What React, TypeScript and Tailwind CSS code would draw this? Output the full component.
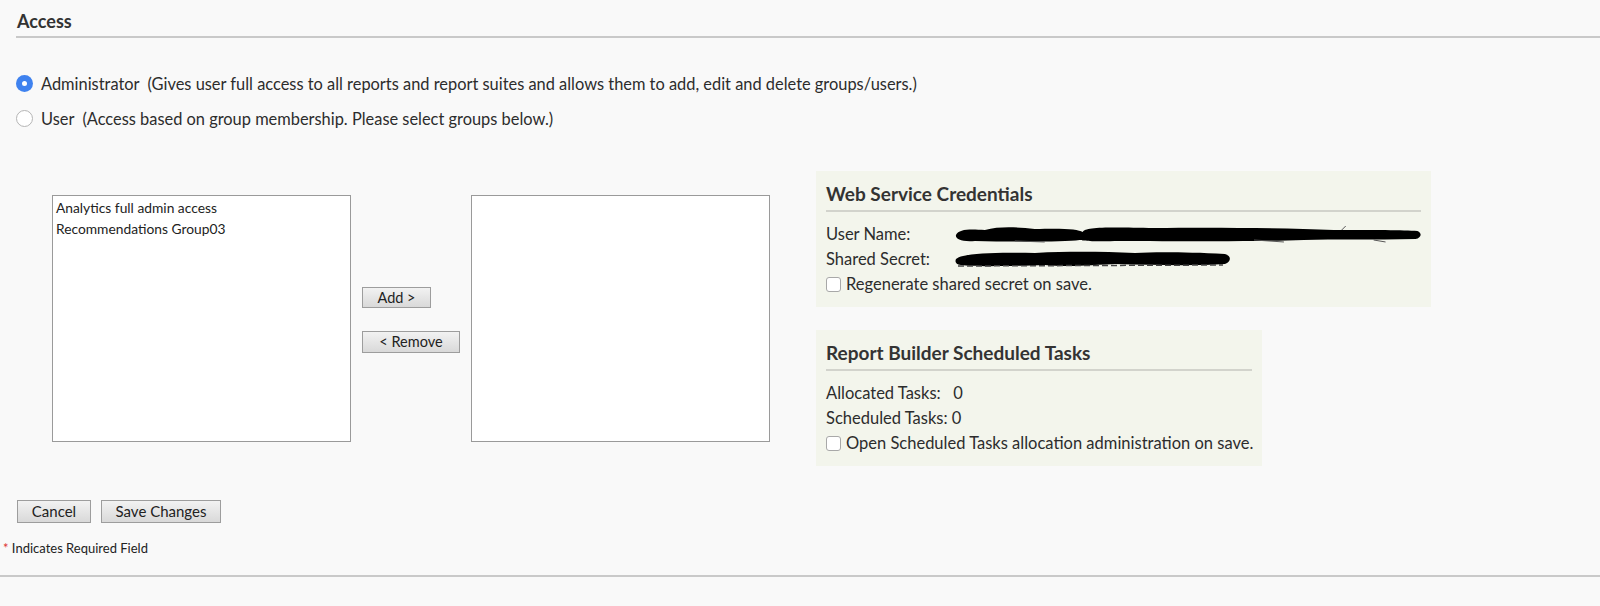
import React from "react";

const font = { fontFamily: "Lato, 'Liberation Sans', sans-serif" };

function Radio({ checked }: { checked?: boolean }) {
  return checked ? (
    <span className="flex h-[17px] w-[17px] shrink-0 items-center justify-center rounded-full bg-[#3f82ef]">
      <span className="h-[5px] w-[5px] rounded-full bg-white" />
    </span>
  ) : (
    <span className="h-[17px] w-[17px] shrink-0 rounded-full border border-[#b5b5b5] bg-white" />
  );
}

function Checkbox() {
  return <span className="h-[15px] w-[15px] shrink-0 rounded-[3px] border border-[#a8a8a8] bg-white" />;
}

function GrayButton({ children, className = "" }: { children: React.ReactNode; className?: string }) {
  return (
    <button
      className={
        "flex items-center justify-center border border-[#9d9d9d] bg-gradient-to-b from-[#f2f2f2] to-[#d9d9d9] text-[#222] " +
        className
      }
    >
      {children}
    </button>
  );
}

function Redaction({ width, variant }: { width: number; variant: 1 | 2 }) {
  if (variant === 1) {
    return (
      <svg width={width} height="17" viewBox="0 0 468 17" className="block">
        <path
          d="M1 9 C4 3 14 3 30 4 C45 0 62 1 80 3 C108 2 124 3 128 6 C131 1 150 1 200 2 C260 1 330 2 380 4 C420 4 450 4 464 5 C469 7 468 12 462 13 C420 14 380 13 350 14 C300 16 220 15 160 15 C130 16 128 14 125 14 C110 16 60 16 20 15 C6 16 0 13 1 9 Z"
          fill="#000"
        />
        <path d="M60 15 L90 16 M300 14 L330 16 M388 4 L392 0 M420 14 L432 16" stroke="#555" strokeWidth="1" />
      </svg>
    );
  }
  return (
    <svg width={width} height="17" viewBox="0 0 276 17" className="block">
      <path
        d="M1 8 C8 2 40 1 80 2 C120 0 150 1 180 2 C200 1 230 1 270 3 C277 5 276 11 270 13 C240 15 200 14 160 13 C120 15 110 16 90 14 C60 15 20 16 6 14 C0 13 0 10 1 8 Z"
        fill="#000"
      />
      <path d="M3 15 L268 14" stroke="#444" strokeWidth="1.5" strokeDasharray="6 3" />
    </svg>
  );
}

function Panel({ title, width, children }: { title: string; width: string; children: React.ReactNode }) {
  return (
    <div className={"bg-[#f3f5ec] px-[10px] pb-[10px] pt-[10px] " + width}>
      <div className="border-b-2 border-[#d2d3cc] pb-[3px] text-[19px] font-bold leading-[26px] text-[#333]">
        {title}
      </div>
      <div className="mt-[10px] flex flex-col whitespace-nowrap text-[16.5px] leading-[25px] text-[#2c2c2c]">
        {children}
      </div>
    </div>
  );
}

export default function App() {
  return (
    <div className="min-h-[606px] w-[1600px] bg-[#f9f9f9] pt-[9px]" style={font}>
      <div className="ml-[16px] border-b-2 border-[#c9c9c9] pb-[3px]">
        <h2 className="pl-[1px] text-[18px] font-bold leading-[24px] text-[#333]">Access</h2>
      </div>

      <div className="ml-[16px] mt-[35px] flex flex-col gap-[14px] text-[16.4px] leading-[21px] text-[#2c2c2c]">
        <label className="flex items-center gap-[8px]">
          <Radio checked />
          <span>
            Administrator&nbsp;&nbsp;(Gives user full access to all reports and report suites and allows them to add,
            edit and delete groups/users.)
          </span>
        </label>
        <label className="flex items-center gap-[8px]">
          <Radio />
          <span>User&nbsp;&nbsp;(Access based on group membership. Please select groups below.)</span>
        </label>
      </div>

      <div className="mt-[42px] flex items-start">
        <div className="ml-[52px] mt-[24px] flex items-start">
          <div className="h-[247px] w-[299px] border border-[#9a9a9a] bg-white px-[3px] pt-[1px] text-[13.8px] leading-[21px] text-[#222]">
            <div>Analytics full admin access</div>
            <div>Recommendations Group03</div>
          </div>
          <div className="ml-[11px] mt-[92px] flex w-[109px] flex-col items-start gap-[23px] text-[14.5px]">
            <GrayButton className="h-[21px] w-[69px]">Add &gt;</GrayButton>
            <GrayButton className="h-[22px] w-[98px]">&lt; Remove</GrayButton>
          </div>
          <div className="h-[247px] w-[299px] border border-[#9a9a9a] bg-white" />
        </div>

        <div className="ml-[46px] flex flex-col gap-[23px]">
          <Panel title="Web Service Credentials" width="w-[615px]">
            <div className="flex items-center">
              <span className="w-[129px]">User Name:</span>
              <Redaction width={468} variant={1} />
            </div>
            <div className="flex items-center">
              <span className="w-[129px]">Shared Secret:</span>
              <Redaction width={276} variant={2} />
            </div>
            <label className="flex items-center gap-[5px]">
              <Checkbox />
              <span>Regenerate shared secret on save.</span>
            </label>
          </Panel>
          <Panel title="Report Builder Scheduled Tasks" width="w-[446px]">
            <div>Allocated Tasks:&nbsp;&nbsp;&nbsp;0</div>
            <div>Scheduled Tasks:&nbsp;0</div>
            <label className="flex items-center gap-[5px]">
              <Checkbox />
              <span>Open Scheduled Tasks allocation administration on save.</span>
            </label>
          </Panel>
        </div>
      </div>

      <div className="ml-[17px] mt-[34px] flex gap-[10px] text-[15px]">
        <GrayButton className="h-[23px] w-[74px]">Cancel</GrayButton>
        <GrayButton className="h-[23px] w-[120px]">Save Changes</GrayButton>
      </div>

      <div className="ml-[3px] mt-[16px] text-[13px] leading-[18px] text-[#222]">
        <span className="text-[#d33]">*</span> Indicates Required Field
      </div>

      <div className="mt-[18px] border-b-2 border-[#c9c9c9]" />
    </div>
  );
}
